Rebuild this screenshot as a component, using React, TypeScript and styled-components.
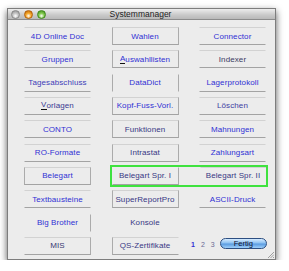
import React from "react";
import styled, { createGlobalStyle, css } from "styled-components";

const GlobalStyle = createGlobalStyle`
  html, body { margin: 0; padding: 0; background: #ffffff; }
  body { font-family: "Liberation Sans", Arial, sans-serif; }
`;

const Window = styled.div`
  position: relative;
  margin: 8px 0 0 7px;
  width: 267px;
  height: 250px;
  background: #ececec;
  border: 1px solid #7d7d7d;
  box-shadow: 0 3px 7px rgba(0, 0, 0, 0.65);
  display: flex;
  flex-direction: column;
`;

const TitleBar = styled.div`
  position: relative;
  height: 10px;
  background: linear-gradient(#ededed, #c9c9c9 60%, #b9b9b9);
  border-bottom: 1px solid #8c8c8c;
  display: flex;
  align-items: center;
  justify-content: center;
`;

const Lights = styled.div`
  position: absolute;
  left: 3px;
  top: 1px;
  display: flex;
  gap: 4px;
`;

const Light = styled.span<{ $c: string; $d: string }>`
  width: 9px;
  height: 9px;
  border-radius: 50%;
  box-sizing: border-box;
  border: 1px solid ${(p) => p.$d};
  background: radial-gradient(circle at 50% 70%, #ffffff 0%, ${(p) => p.$c} 45%, ${(p) => p.$d} 100%);
`;

const Title = styled.div`
  font-size: 8.5px;
  color: #1e1e1e;
  line-height: 10px;
  margin-left: -2px;
`;

const Content = styled.div`
  flex: 1;
  display: grid;
  grid-template-columns: repeat(3, 67px);
  grid-auto-rows: 18px;
  column-gap: 20.5px;
  row-gap: 5.33px;
  padding: 7px 0 0 16px;
`;

type Edges = string;

const Btn = styled.div<{ $edges: Edges; $tone?: string }>`
  display: flex;
  align-items: center;
  justify-content: center;
  box-sizing: border-box;
  font-size: 8px;
  letter-spacing: 0.1px;
  color: ${(p) => p.$tone || "#3030d4"};
  white-space: nowrap;
  border: 1px solid transparent;
  ${(p) => p.$edges.includes("t") && css`border-top-color: #d2d2d2;`}
  ${(p) => p.$edges.includes("b") && css`border-bottom-color: #a3a3a3;`}
  ${(p) => p.$edges.includes("l") && css`border-left-color: #ababab;`}
  ${(p) => p.$edges.includes("r") && css`border-right-color: #ababab;`}
  u { text-decoration: none; border-bottom: 1px solid #111; line-height: 8px; }
`;

const FocusGroup = styled.div`
  grid-column: 2 / 4;
  display: grid;
  grid-template-columns: 67px 67px;
  column-gap: 21px;
  outline: 2px solid #3fe23f;
  outline-offset: -0.5px;
`;

const BottomCell = styled.div`
  display: flex;
  justify-content: flex-start;
  align-items: flex-start;
  padding-top: 1px;
  gap: 5px;
  margin-left: -8px;
`;

const Pager = styled.div`
  display: flex;
  flex-shrink: 0;
  gap: 6px;
  font-size: 7px;
  line-height: 9px;
  padding-top: 2px;
`;

const Page = styled.span<{ $active?: boolean }>`
  color: ${(p) => (p.$active ? "#3030d4" : "#6a6a94")};
  font-weight: ${(p) => (p.$active ? "bold" : "normal")};
`;

const Fertig = styled.div`
  flex-shrink: 0;
  width: 47px;
  height: 11px;
  box-sizing: border-box;
  border: 1px solid #2d4f82;
  border-radius: 6px;
  background: linear-gradient(#d6ebff 0%, #8cc1f2 45%, #5a9be0 55%, #9fd0fb 100%);
  font-size: 7.5px;
  line-height: 9px;
  color: #101030;
  text-align: center;
`;

const Grip = styled.svg`
  position: absolute;
  right: 1px;
  bottom: 1px;
`;

type Item = { label: React.ReactNode; edges: Edges; tone?: string };

const rows: Item[][] = [
  [
    { label: "4D Online Doc", edges: "tb" },
    { label: "Wahlen", edges: "tblr" },
    { label: "Connector", edges: "tb" },
  ],
  [
    { label: "Gruppen", edges: "tb" },
    { label: <><u>A</u>uswahllisten</>, edges: "tblr" },
    { label: "Indexer", edges: "tb", tone: "#3a3a62" },
  ],
  [
    { label: "Tagesabschluss", edges: "b", tone: "#4040b8" },
    { label: "DataDict", edges: "lr" },
    { label: "Lagerprotokoll", edges: "b" },
  ],
  [
    { label: <><u>V</u>orlagen</>, edges: "tb", tone: "#3a3a92" },
    { label: "Kopf-Fuss-Vorl.", edges: "tblr" },
    { label: "Löschen", edges: "tb", tone: "#4040a2" },
  ],
  [
    { label: "CONTO", edges: "tb" },
    { label: "Funktionen", edges: "tblr", tone: "#383884" },
    { label: "Mahnungen", edges: "tb" },
  ],
  [
    { label: "RO-Formate", edges: "tb" },
    { label: "Intrastat", edges: "tblr", tone: "#383884" },
    { label: "Zahlungsart", edges: "tb" },
  ],
];

export default function App() {
  return (
    <>
      <GlobalStyle />
      <Window>
        <TitleBar>
          <Lights>
            <Light $c="#c4c4c4" $d="#8a8a8a" />
            <Light $c="#f5a524" $d="#b5610a" />
            <Light $c="#7fc84a" $d="#3f8a1c" />
          </Lights>
          <Title>Systemmanager</Title>
        </TitleBar>
        <Content>
          {rows.map((r, i) =>
            r.map((it, j) => (
              <Btn key={`${i}-${j}`} $edges={it.edges} $tone={it.tone}>
                {it.label}
              </Btn>
            ))
          )}
          <Btn $edges="tblr">Belegart</Btn>
          <FocusGroup>
            <Btn $edges="rb" $tone="#383884">Belegart Spr. I</Btn>
            <Btn $edges="t" $tone="#383884">Belegart Spr. II</Btn>
          </FocusGroup>
          <Btn $edges="tb">Textbausteine</Btn>
          <Btn $edges="tblr" $tone="#383884">SuperReportPro</Btn>
          <Btn $edges="b">ASCII-Druck</Btn>
          <Btn $edges="r">Big Brother</Btn>
          <Btn $edges="" $tone="#383884">Konsole</Btn>
          <div />
          <Btn $edges="tbr" $tone="#383872">MIS</Btn>
          <Btn $edges="tbl" $tone="#383884">QS-Zertifikate</Btn>
          <BottomCell>
            <Pager>
              <Page $active>1</Page>
              <Page>2</Page>
              <Page>3</Page>
            </Pager>
            <Fertig>Fertig</Fertig>
          </BottomCell>
        </Content>
        <Grip width="7" height="7" viewBox="0 0 7 7">
          <path d="M1 7 L7 1 M3.5 7 L7 3.5 M6 7 L7 6" stroke="#8a8a8a" strokeWidth="0.8" />
        </Grip>
      </Window>
    </>
  );
}
